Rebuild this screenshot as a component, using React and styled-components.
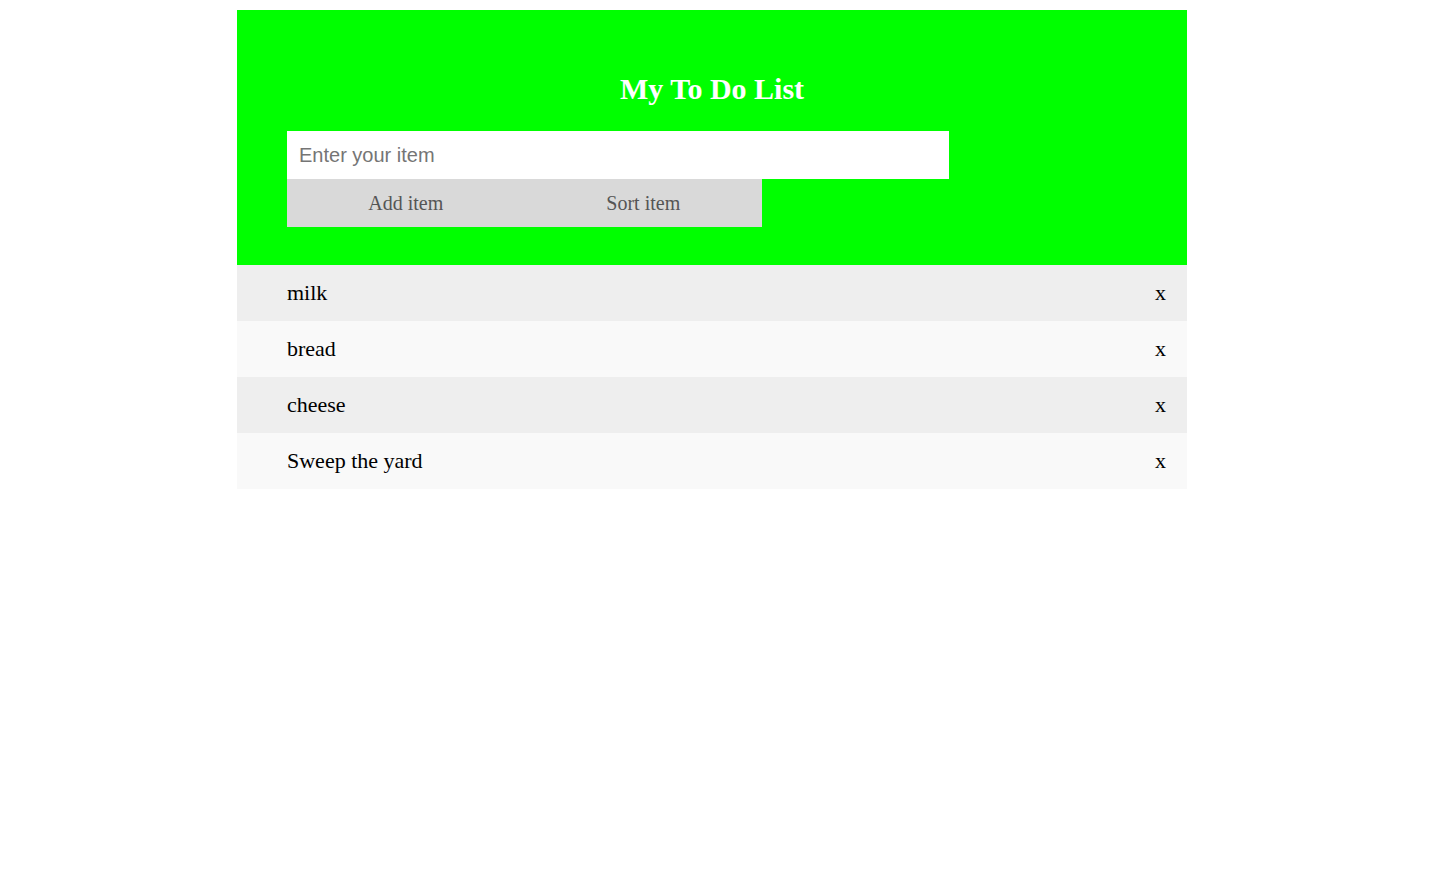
import React from "react";
import styled, { createGlobalStyle } from "styled-components";

const Global = createGlobalStyle`
  html, body { margin: 0; padding: 0; background: #fff; }
  body { font-family: "Liberation Serif", "Times New Roman", serif; }
`;

const Page = styled.div`
  padding: 10px 18px 0 0;
`;

const Container = styled.div`
  width: 950px;
  margin: 0 auto;
`;

const Header = styled.header`
  background: #00ff00;
  padding: 62px 50px 38px;
`;

const Title = styled.h2`
  margin: 0 0 25px;
  text-align: center;
  color: #fff;
  font-family: "Liberation Serif", "Times New Roman", serif;
  font-weight: bold;
  font-size: 30px;
  line-height: 34px;
`;

const Input = styled.input`
  display: block;
  box-sizing: border-box;
  width: 662px;
  height: 48px;
  border: none;
  outline: none;
  margin: 0;
  padding: 0 12px;
  background: #fff;
  font-family: "Liberation Sans", Arial, sans-serif;
  font-size: 20px;
  color: #333;
  &::placeholder { color: #757575; }
`;

const ButtonRow = styled.div`
  display: flex;
  width: 475px;
`;

const Button = styled.button`
  flex: 1;
  height: 48px;
  border: none;
  margin: 0;
  padding: 0;
  background: #d9d9d9;
  color: #555;
  font-family: "Liberation Serif", "Times New Roman", serif;
  font-size: 20px;
  cursor: pointer;
`;

const List = styled.ul`
  list-style: none;
  margin: 0;
  padding: 0;
`;

const Item = styled.li`
  display: flex;
  align-items: center;
  justify-content: space-between;
  height: 56px;
  padding: 0 21px 0 50px;
  background: ${(p) => (p.$odd ? "#f9f9f9" : "#eeeeee")};
  font-size: 22px;
  line-height: 56px;
  color: #000;
`;

const Close = styled.span`
  cursor: pointer;
`;

const items = ["milk", "bread", "cheese", "Sweep the yard"];

export default function App() {
  return (
    <>
      <Global />
      <Page>
        <Container>
          <Header>
            <Title>My To Do List</Title>
            <Input placeholder="Enter your item" />
            <ButtonRow>
              <Button>Add item</Button>
              <Button>Sort item</Button>
            </ButtonRow>
          </Header>
          <List>
            {items.map((t, i) => (
              <Item key={t} $odd={i % 2 === 1}>
                <span>{t}</span>
                <Close>x</Close>
              </Item>
            ))}
          </List>
        </Container>
      </Page>
    </>
  );
}
